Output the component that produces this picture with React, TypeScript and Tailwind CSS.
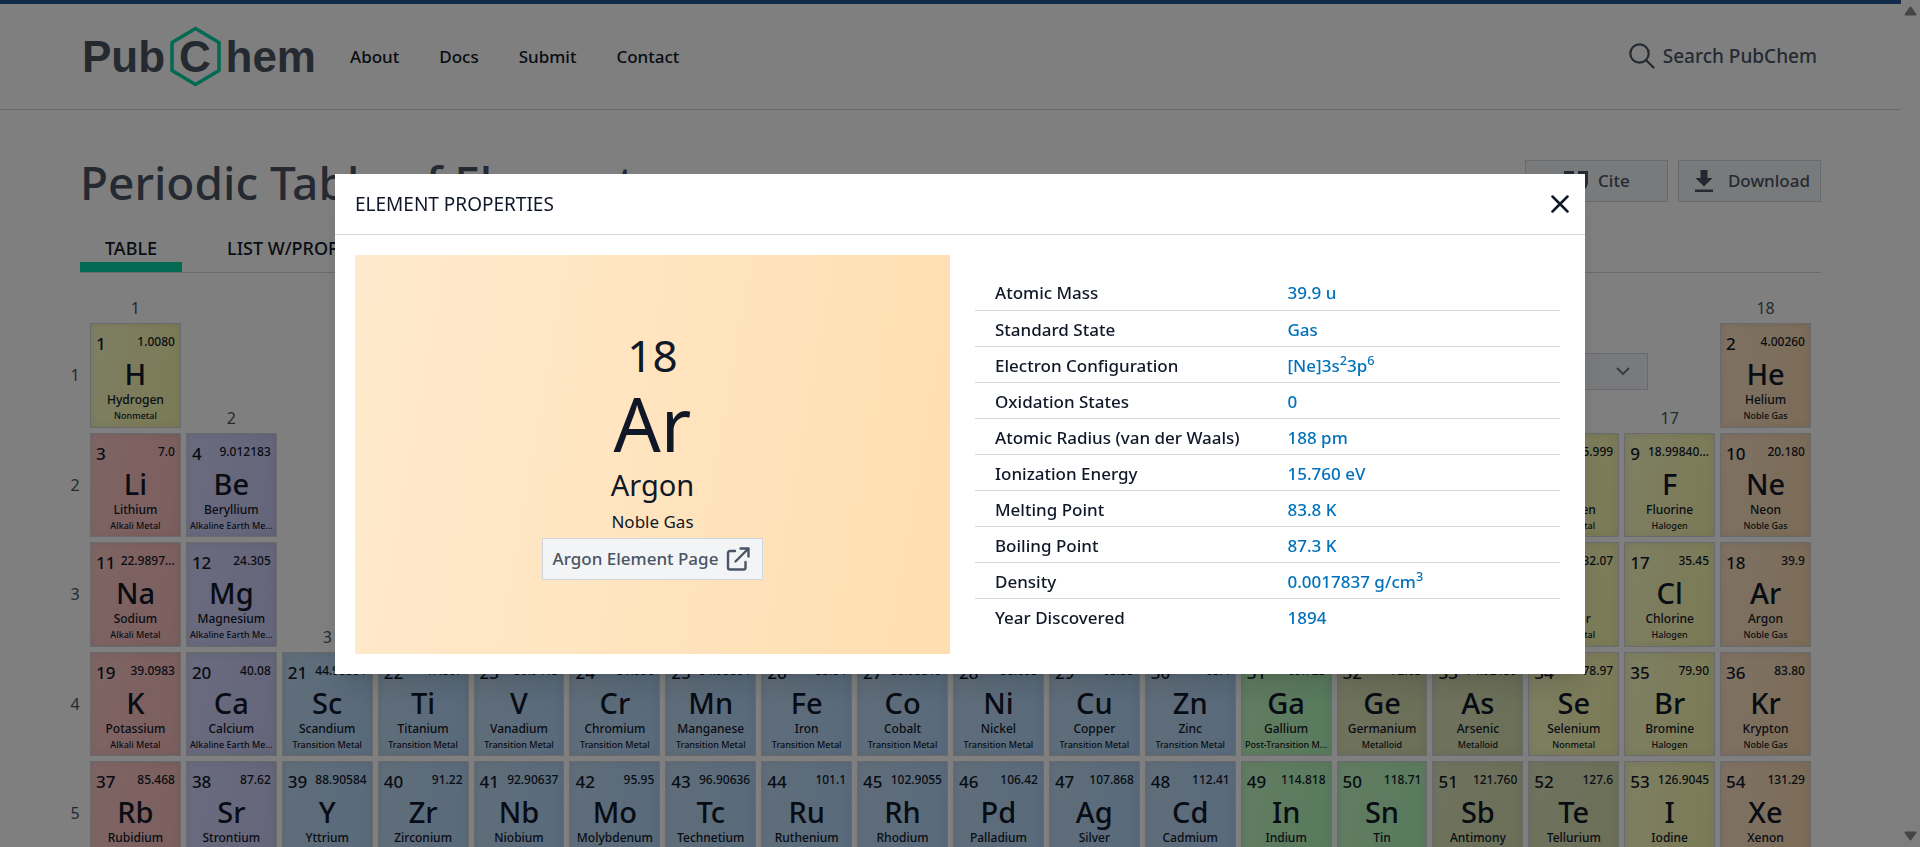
import React from "react";

type Kind = "alkali" | "alkaline" | "transition" | "post" | "metalloid" | "nonmetal" | "halogen" | "noble";

const KINDS: Record<Kind, { label: string; color: string }> = {
  alkali: { label: "Alkali Metal", color: "from-[#ffcaca] to-[#f8bcbc]" },
  alkaline: { label: "Alkaline Earth Me...", color: "from-[#d7d7ff] to-[#cacaf6]" },
  transition: { label: "Transition Metal", color: "from-[#c2dcf4] to-[#b0d4f8]" },
  post: { label: "Post-Transition M...", color: "from-[#c4f8c4] to-[#b0f6ba]" },
  metalloid: { label: "Metalloid", color: "from-[#dfe6be] to-[#d8dfae]" },
  nonmetal: { label: "Nonmetal", color: "from-[#fdfdc8] to-[#f6f6aa]" },
  halogen: { label: "Halogen", color: "from-[#fdfdc8] to-[#f6f6aa]" },
  noble: { label: "Noble Gas", color: "from-[#fde4c8] to-[#f8d8ae]" },
};

type Element = [number, string, string, string, Kind, number, number];

// number, symbol, name, mass, kind, period, group
const ELEMENTS: Element[] = [
  [1, "H", "Hydrogen", "1.0080", "nonmetal", 1, 1],
  [2, "He", "Helium", "4.00260", "noble", 1, 18],
  [3, "Li", "Lithium", "7.0", "alkali", 2, 1],
  [4, "Be", "Beryllium", "9.012183", "alkaline", 2, 2],
  [5, "B", "Boron", "10.81", "metalloid", 2, 13],
  [6, "C", "Carbon", "12.011", "nonmetal", 2, 14],
  [7, "N", "Nitrogen", "14.007", "nonmetal", 2, 15],
  [8, "O", "Oxygen", "15.999", "nonmetal", 2, 16],
  [9, "F", "Fluorine", "18.99840...", "halogen", 2, 17],
  [10, "Ne", "Neon", "20.180", "noble", 2, 18],
  [11, "Na", "Sodium", "22.9897...", "alkali", 3, 1],
  [12, "Mg", "Magnesium", "24.305", "alkaline", 3, 2],
  [13, "Al", "Aluminum", "26.981...", "post", 3, 13],
  [14, "Si", "Silicon", "28.085", "metalloid", 3, 14],
  [15, "P", "Phosphorus", "30.973...", "nonmetal", 3, 15],
  [16, "S", "Sulfur", "32.07", "nonmetal", 3, 16],
  [17, "Cl", "Chlorine", "35.45", "halogen", 3, 17],
  [18, "Ar", "Argon", "39.9", "noble", 3, 18],
  [19, "K", "Potassium", "39.0983", "alkali", 4, 1],
  [20, "Ca", "Calcium", "40.08", "alkaline", 4, 2],
  [21, "Sc", "Scandium", "44.95591", "transition", 4, 3],
  [22, "Ti", "Titanium", "47.867", "transition", 4, 4],
  [23, "V", "Vanadium", "50.9415", "transition", 4, 5],
  [24, "Cr", "Chromium", "51.996", "transition", 4, 6],
  [25, "Mn", "Manganese", "54.93804", "transition", 4, 7],
  [26, "Fe", "Iron", "55.84", "transition", 4, 8],
  [27, "Co", "Cobalt", "58.93319", "transition", 4, 9],
  [28, "Ni", "Nickel", "58.693", "transition", 4, 10],
  [29, "Cu", "Copper", "63.55", "transition", 4, 11],
  [30, "Zn", "Zinc", "65.4", "transition", 4, 12],
  [31, "Ga", "Gallium", "69.723", "post", 4, 13],
  [32, "Ge", "Germanium", "72.63", "metalloid", 4, 14],
  [33, "As", "Arsenic", "74.92159", "metalloid", 4, 15],
  [34, "Se", "Selenium", "78.97", "nonmetal", 4, 16],
  [35, "Br", "Bromine", "79.90", "halogen", 4, 17],
  [36, "Kr", "Krypton", "83.80", "noble", 4, 18],
  [37, "Rb", "Rubidium", "85.468", "alkali", 5, 1],
  [38, "Sr", "Strontium", "87.62", "alkaline", 5, 2],
  [39, "Y", "Yttrium", "88.90584", "transition", 5, 3],
  [40, "Zr", "Zirconium", "91.22", "transition", 5, 4],
  [41, "Nb", "Niobium", "92.90637", "transition", 5, 5],
  [42, "Mo", "Molybdenum", "95.95", "transition", 5, 6],
  [43, "Tc", "Technetium", "96.90636", "transition", 5, 7],
  [44, "Ru", "Ruthenium", "101.1", "transition", 5, 8],
  [45, "Rh", "Rhodium", "102.9055", "transition", 5, 9],
  [46, "Pd", "Palladium", "106.42", "transition", 5, 10],
  [47, "Ag", "Silver", "107.868", "transition", 5, 11],
  [48, "Cd", "Cadmium", "112.41", "transition", 5, 12],
  [49, "In", "Indium", "114.818", "post", 5, 13],
  [50, "Sn", "Tin", "118.71", "post", 5, 14],
  [51, "Sb", "Antimony", "121.760", "metalloid", 5, 15],
  [52, "Te", "Tellurium", "127.6", "metalloid", 5, 16],
  [53, "I", "Iodine", "126.9045", "halogen", 5, 17],
  [54, "Xe", "Xenon", "131.29", "noble", 5, 18],
];

// Grid row in which each group's number sits, directly above its first element.
const GROUP_ROWS = [1, 2, 4, 4, 4, 4, 4, 4, 4, 4, 4, 4, 2, 2, 2, 2, 2, 1];

const PROPERTIES: [string, React.ReactNode][] = [
  ["Atomic Mass", "39.9 u"],
  ["Standard State", "Gas"],
  ["Electron Configuration", <>[Ne]3s<sup>2</sup>3p<sup>6</sup></>],
  ["Oxidation States", "0"],
  ["Atomic Radius (van der Waals)", "188 pm"],
  ["Ionization Energy", "15.760 eV"],
  ["Melting Point", "83.8 K"],
  ["Boiling Point", "87.3 K"],
  ["Density", <>0.0017837 g/cm<sup>3</sup></>],
  ["Year Discovered", "1894"],
];

function Logo() {
  return (
    <svg width="240" height="64" viewBox="0 0 240 64" role="img" aria-label="PubChem">
      <g fill="#4b5563" fontFamily="'Liberation Sans', Arial, sans-serif" fontWeight="700" fontSize="44">
        <text x="0" y="46.500">Pub</text>
        <text x="97" y="46.500">C</text>
        <text x="143.500" y="46.500">hem</text>
      </g>
      <path d="M113.500 3.500 L137 17.500 V45.500 L113.500 59.500 L90 45.500 V17.500 Z" fill="none" stroke="#04d4a4" strokeWidth="3.500" />
    </svg>
  );
}

function Header() {
  return (
    <header className="flex h-[110px] shrink-0 items-center border-t-4 border-b border-t-[#255494] border-b-gray-300 px-20">
      <a href="#home" className="ml-[2px]"><Logo /></a>
      <nav className="ml-7 flex flex-1 gap-10 text-[17px] font-medium text-gray-900">
        <a href="#about">About</a>
        <a href="#docs">Docs</a>
        <a href="#submit">Submit</a>
        <a href="#contact">Contact</a>
      </nav>
      <button className="mr-1 mb-[2px] flex items-center gap-2 text-[19px] leading-7 font-medium text-gray-600">
        <svg width="26" height="26" viewBox="0 0 26 26" fill="none" stroke="currentColor" strokeWidth="2.200" strokeLinecap="round">
          <circle cx="10.500" cy="10.500" r="9.200" />
          <path d="M17.200 17.200 L24.500 24.500" />
        </svg>
        Search PubChem
      </button>
    </header>
  );
}

function ActionButton({ children }: { children: React.ReactNode }) {
  return (
    <button className="flex h-[42px] w-[143px] items-center justify-between border border-gray-300 bg-gray-100 pr-[10px] pl-4 text-[17px] font-medium text-gray-600">
      {children}
    </button>
  );
}

function Tile({ el }: { el: Element }) {
  const [num, symbol, name, mass, kind, period, group] = el;
  return (
    <button
      style={{ gridRow: period + 1, gridColumn: group + 1 }}
      className={`flex aspect-[20/23] min-w-0 flex-col overflow-hidden border border-gray-300 bg-linear-100 pt-2 text-center font-medium text-gray-900 shadow-[inset_0_0_8px_rgba(0,0,0,0.08)] ${KINDS[kind].color}`}
    >
      <span className="flex h-6 items-center justify-between px-[5px]">
        <span className="text-[17px]">{num}</span>
        <span className="mb-1 text-xs leading-4">{mass}</span>
      </span>
      <span className="h-9 text-[29px] leading-9">{symbol}</span>
      <span className="h-4 overflow-hidden text-xs leading-4">{name}</span>
      <span className="h-4 overflow-hidden text-[9px] leading-4 whitespace-nowrap">{KINDS[kind].label}</span>
    </button>
  );
}

function PeriodicTable() {
  return (
    <div className="grid grid-cols-[20px_repeat(18,minmax(0,1fr))] grid-rows-[20px] gap-[5px] pt-[25px] pr-[90px] pl-[65px]">
      {GROUP_ROWS.map((row, i) => (
        <span key={i} style={{ gridRow: row, gridColumn: i + 2 }} className="self-end text-center text-base leading-5 text-gray-600">
          {i + 1}
        </span>
      ))}
      {[1, 2, 3, 4, 5].map((p) => (
        <span key={p} style={{ gridRow: p + 1, gridColumn: 1 }} className="self-center text-center text-base leading-5 text-gray-600">
          {p}
        </span>
      ))}
      <div className="col-start-8 col-end-19 row-start-2 mt-[30px] flex items-start justify-end pr-[67px]">
        <label className="relative">
          <span className="sr-only">Display property</span>
          <select className="h-[37px] w-[360px] appearance-none border border-gray-300 bg-gray-100 px-3 text-gray-600">
            <option>Chemical Group Block</option>
          </select>
          <svg className="absolute top-[14px] right-[18px] text-gray-500" width="14" height="9" viewBox="0 0 14 9" fill="none" stroke="currentColor" strokeWidth="1.800">
            <path d="M1 1 L7 7 L13 1" />
          </svg>
        </label>
      </div>
      {ELEMENTS.map((el) => (
        <Tile key={el[0]} el={el} />
      ))}
    </div>
  );
}

function ElementDialog() {
  return (
    <div className="fixed inset-0 flex items-center justify-center bg-black/50">
      <section role="dialog" aria-labelledby="dialog-title" className="w-full max-w-[1250px] bg-white text-gray-900 shadow-xl">
        <div className="flex h-[61px] items-center justify-between border-b border-gray-300 px-4 pl-5">
          <h2 id="dialog-title" className="text-[19px] leading-7">ELEMENT PROPERTIES</h2>
          <button aria-label="Close">
            <svg width="18" height="18" viewBox="0 0 18 18" fill="none" stroke="currentColor" strokeWidth="2.500" strokeLinecap="round">
              <path d="M1.500 1.500 L16.500 16.500 M16.500 1.500 L1.500 16.500" />
            </svg>
          </button>
        </div>
        <div className="grid grid-cols-[595fr_585fr] gap-[25px] py-5 pr-[25px] pl-5">
          <div className="flex min-h-[399px] flex-col items-center justify-center bg-linear-100 from-[#ffeacd] to-[#ffdeb0] pt-[2px]">
            <div className="text-[44px] leading-[50px]">18</div>
            <div className="text-[74px] leading-[88px]">Ar</div>
            <div className="text-[29px] leading-[34px]">Argon</div>
            <div className="mt-1 text-[17px] leading-8">Noble Gas</div>
            <a href="#argon" className="flex h-[42px] items-center gap-2 border border-gray-300 bg-gray-100 pr-3 pl-[10px] text-[17px] font-medium text-gray-600">
              Argon Element Page
              <svg width="24" height="24" viewBox="0 0 24 24" fill="none" stroke="currentColor" strokeWidth="2.400" strokeLinecap="round" strokeLinejoin="round">
                <path d="M9 4 H4 Q2 4 2 6 V20.500 Q2 22.500 4 22.500 H17.500 Q19.500 22.500 19.500 20.500 V15" />
                <path d="M14.500 1.500 H22.500 V9.500 M22.500 1.500 L9.500 14.500" />
              </svg>
            </a>
          </div>
          <table className="mt-5 self-start text-left text-[17px] leading-6 font-medium">
            <tbody>
              {PROPERTIES.map(([label, value]) => (
                <tr key={label} className="h-9 border-b border-gray-300 last:border-b-0">
                  <th scope="row" className="w-1/2 pt-[2px] pl-5 font-medium">{label}</th>
                  <td className="pt-[2px] pl-5 text-[#0071bc]">{value}</td>
                </tr>
              ))}
            </tbody>
          </table>
        </div>
      </section>
    </div>
  );
}

export default function App() {
  return (
    <div className="flex h-screen overflow-hidden bg-white font-['Noto_Sans','Open_Sans',sans-serif]">
      <div className="flex min-w-0 flex-1 flex-col">
        <Header />
        <main>
          <div className="flex items-start justify-between px-20 pt-[50px]">
            <h1 className="text-[46px] leading-[44px] font-medium text-gray-600">Periodic Table of Elements</h1>
            <div className="flex gap-[10px]">
              <ActionButton>
                <svg width="24" height="20" viewBox="0 0 24 20" fill="currentColor" className="ml-[22px]">
                  <path d="M0 0 H10 V11 Q10 18 3 20 L2 17 Q5 15 5 11 H0 Z M14 0 H24 V11 Q24 18 17 20 L16 17 Q19 15 19 11 H14 Z" />
                </svg>
                <span className="mr-auto ml-[10px]">Cite</span>
              </ActionButton>
              <ActionButton>
                <svg width="18" height="22" viewBox="0 0 18 22" fill="currentColor">
                  <path d="M5.500 0 H12.500 V8 H17.500 L9 16.500 L0.500 8 H5.500 Z M0 19.500 H18 V22 H0 Z" />
                </svg>
                Download
              </ActionButton>
            </div>
          </div>
          <nav className="mx-20 mt-8 flex gap-5 border-b border-gray-300 text-lg leading-6 font-medium text-gray-900">
            <a href="#table" className="border-b-10 border-[#04d4a4] px-[25px] pb-[2px]">TABLE</a>
            <a href="#list" className="px-[25px]">LIST W/PROPERTIES</a>
          </nav>
          <PeriodicTable />
        </main>
      </div>
      <div className="flex w-[19px] flex-col items-center justify-between bg-[#fcfcfc] py-[6px]" aria-hidden="true">
        <svg width="13" height="10" viewBox="0 0 13 10" fill="#8a8a8a" stroke="#8a8a8a" strokeLinejoin="round" strokeWidth="2">
          <path d="M6.500 1.500 L11.500 8.500 H1.500 Z" />
        </svg>
        <svg width="13" height="10" viewBox="0 0 13 10" fill="#8a8a8a" stroke="#8a8a8a" strokeLinejoin="round" strokeWidth="2">
          <path d="M6.500 8.500 L11.500 1.500 H1.500 Z" />
        </svg>
      </div>
      <ElementDialog />
    </div>
  );
}
